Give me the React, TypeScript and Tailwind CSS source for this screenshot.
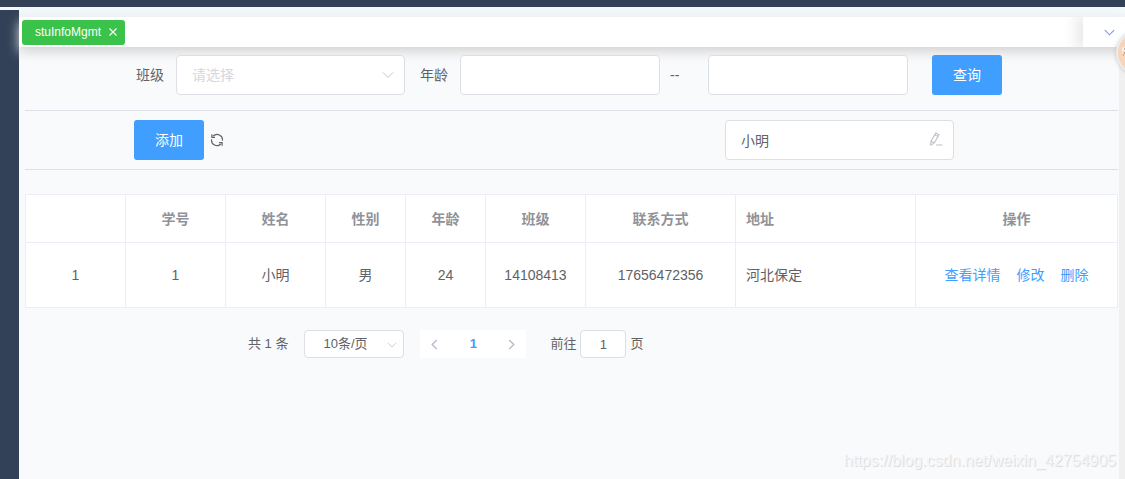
import { useState } from "react";

interface IStudent {
  index: number;
  stuNo: string;
  name: string;
  gender: string;
  age: number;
  className: string;
  phone: string;
  address: string;
}

const students: IStudent[] = [
  {
    index: 1,
    stuNo: "1",
    name: "小明",
    gender: "男",
    age: 24,
    className: "14108413",
    phone: "17656472356",
    address: "河北保定",
  },
];

const th = "h-12 border-r border-b border-[#ebeef5] px-[10px] font-bold text-[#909399]";
const td = "h-[65px] border-r border-b border-[#ebeef5] px-[10px]";
const field = "rounded border border-[#dcdfe6] bg-white outline-none";
const primary = "h-10 w-[70px] shrink-0 rounded-[3px] bg-[#409eff] text-white";

const Chevron = ({ className, d }: { className: string; d: string }) => (
  <svg className={className} viewBox="0 0 12 12" fill="none" stroke="currentColor" aria-hidden="true">
    <path d={d} />
  </svg>
);

const down = "M1 3.5 6 8.5 11 3.5";

const TagBar = () => (
  <div className="relative mt-[7px] flex h-[30px] items-center bg-white pl-[3px] shadow-[0_5px_12px_#d4d4d4]">
    <div className="flex h-[25px] items-center gap-[7px] rounded-[3px] bg-[#3bc24a] pr-[7px] pl-[13px] text-xs text-white">
      <a href="#stuInfoMgmt">stuInfoMgmt</a>
      <button aria-label="关闭">
        <svg className="size-[10px]" viewBox="0 0 10 10" stroke="currentColor" strokeWidth="1.1" aria-hidden="true">
          <path d="M1.5 1.5 8.5 8.5M8.5 1.5 1.5 8.5" />
        </svg>
      </button>
    </div>
    <button
      aria-label="标签选项"
      className="ml-auto flex h-full w-[42px] items-center justify-center bg-white pl-[10px] text-[#7f93f8] shadow-[-3px_0_15px_3px_rgba(0,0,0,0.1)] [clip-path:inset(0_0_0_-20px)]"
    >
      <Chevron className="size-[11px] stroke-[1.2]" d={down} />
    </button>
    {/* floating ball, mostly past the right edge */}
    <div className="absolute top-[14px] -right-[35px] size-11 rounded-full border-2 border-[#ececec] bg-[#f8d5b8] shadow-[0_0_4px_rgba(0,0,0,0.2)]">
      <svg className="absolute top-[13px] left-[3px] h-3 w-2" viewBox="0 0 8 12" fill="none" aria-hidden="true">
        <path d="M1 3Q1 1 4 1H8V8H4V5H2L1 8Z" fill="#f4f0ea" />
        <path d="M3 3H6M4 6V8M2 9H3" stroke="#9a7f6c" />
      </svg>
    </div>
  </div>
);

const SearchForm = () => (
  <form className="flex items-center border-b border-[#dcdfe6] pt-2 pb-[15px] pl-[111px]" onSubmit={(e) => e.preventDefault()}>
    <label htmlFor="class" className="mr-3 shrink-0">班级</label>
    <div className="relative mr-[15px] w-[229px]">
      <select id="class" defaultValue="" className={`${field} block h-10 w-full appearance-none px-[15px] text-[#d5d7dc]`}>
        <option value="">请选择</option>
        <option value="14108413">14108413</option>
      </select>
      <Chevron className="pointer-events-none absolute top-[14px] right-[11px] size-3 text-[#c0c4cc]" d={down} />
    </div>
    <label htmlFor="minAge" className="mr-3 shrink-0">年龄</label>
    <input id="minAge" className={`${field} h-10 w-[200px] px-[15px]`} />
    <label htmlFor="maxAge" className="w-12 shrink-0 pl-[10px]">--</label>
    <input id="maxAge" className={`${field} h-10 w-[200px] px-[15px]`} />
    <button className={`${primary} ml-6`}>查询</button>
  </form>
);

const Toolbar = () => {
  const [name, setName] = useState("小明");
  return (
    <div className="flex h-[59px] items-center border-b border-[#dcdfe6] pl-[109px]">
      <button className={primary}>添加</button>
      <button aria-label="刷新" className="ml-[6px]">
        <svg className="size-[14px]" viewBox="0 0 14 14" fill="none" stroke="currentColor" strokeWidth="1.2" aria-hidden="true">
          <path d="M3.2 3A5.4 5.4 0 0 1 12.4 7.6M10.8 11A5.4 5.4 0 0 1 1.6 6.4" />
          <path d="M1.9 1.2V4.3H5M12.1 12.8V9.7H9" />
        </svg>
      </button>
      <div className="relative mr-[164px] ml-auto w-[229px]">
        <input
          aria-label="姓名"
          value={name}
          onChange={(e) => setName(e.target.value)}
          className={`${field} block h-10 w-full pr-[30px] pl-[15px]`}
        />
        <svg
          className="pointer-events-none absolute top-3 right-[11px] size-[14px] text-[#c0c4cc]"
          viewBox="0 0 14 14"
          fill="none"
          stroke="currentColor"
          strokeWidth="1.2"
          aria-hidden="true"
        >
          <path d="M6.8 1 10 2.8 5.2 11 1.8 13 2 9.2ZM5.8 2.8 9 4.6M2 9.2 5.2 11M7 13H13.5" />
        </svg>
      </div>
    </div>
  );
};

const StudentTable = () => (
  <table className="mt-6 w-full table-fixed border-separate border-spacing-0 border-t border-l border-[#ebeef5] bg-white text-center">
    <colgroup>
      <col className="w-[100px]" />
      <col className="w-[100px]" />
      <col className="w-[100px]" />
      <col className="w-20" />
      <col className="w-20" />
      <col className="w-[100px]" />
      <col className="w-[150px]" />
      <col className="w-[180px]" />
      <col />
    </colgroup>
    <thead>
      <tr>
        <th className={th}></th>
        <th className={th}>学号</th>
        <th className={th}>姓名</th>
        <th className={th}>性别</th>
        <th className={th}>年龄</th>
        <th className={th}>班级</th>
        <th className={th}>联系方式</th>
        <th className={`${th} text-left`}>地址</th>
        <th className={th}>操作</th>
      </tr>
    </thead>
    <tbody>
      {students.map((stu) => (
        <tr key={stu.stuNo}>
          <td className={td}>{stu.index}</td>
          <td className={td}>{stu.stuNo}</td>
          <td className={td}>{stu.name}</td>
          <td className={td}>{stu.gender}</td>
          <td className={td}>{stu.age}</td>
          <td className={td}>{stu.className}</td>
          <td className={td}>{stu.phone}</td>
          <td className={`${td} text-left`}>{stu.address}</td>
          <td className={td}>
            <div className="flex justify-center gap-4 text-[#409eff]">
              <button>查看详情</button>
              <button>修改</button>
              <button>删除</button>
            </div>
          </td>
        </tr>
      ))}
    </tbody>
  </table>
);

const Pagination = () => (
  <div className="mt-[22px] flex h-7 items-center pl-[223px] text-[13px]">
    <span className="mr-4">共 1 条</span>
    <div className="relative mr-4 w-[100px]">
      <select aria-label="每页条数" className={`${field} block h-7 w-full appearance-none pl-[18px]`}>
        <option>10条/页</option>
        <option>20条/页</option>
      </select>
      <Chevron className="pointer-events-none absolute top-[10px] right-[7px] size-[10px] text-[#c0c4cc]" d={down} />
    </div>
    <div className="mr-6 flex h-full w-[106px] items-center justify-between bg-white px-[9px]">
      <button aria-label="上一页" className="text-[#b4bccc]">
        <Chevron className="size-[11px] stroke-[1.5]" d="M8.5 1 3.5 6 8.5 11" />
      </button>
      <button className="font-bold text-[#409eff]">1</button>
      <button aria-label="下一页" className="text-[#b4bccc]">
        <Chevron className="size-[11px] stroke-[1.5]" d="M3.5 1 8.5 6 3.5 11" />
      </button>
    </div>
    <label className="flex items-center gap-1">
      前往
      <input defaultValue="1" className={`${field} h-7 w-[46px] text-center`} />
      页
    </label>
  </div>
);

const App = () => {
  return (
    <div className="flex min-h-screen flex-col overflow-x-clip bg-[#f9fafc] font-['Liberation_Sans','Noto_Sans_CJK_SC',sans-serif] text-sm text-[#606266]">
      <header className="h-[7px] bg-[#324157]" />
      <div className="flex flex-1">
        <aside className="w-[19px] shrink-0 border-t-[3px] border-[#f2f7f9] bg-[#324157]" />
        <main className="flex min-w-0 flex-1 flex-col">
          <div className="bg-[#f2f7f9] pt-[3px]">
            <TagBar />
          </div>
          <div className="flex flex-1">
            <div className="relative flex min-w-0 flex-1 flex-col pr-px pl-[6px]">
              <SearchForm />
              <Toolbar />
              <StudentTable />
              <Pagination />
              <p className="mt-auto mr-[2px] pb-[6px] text-right text-base text-[#f6f6f7] [text-shadow:1px_1px_0_#dcdddf]">
                https://blog.csdn.net/weixin_42754905
              </p>
            </div>
            <div className="w-[6px] bg-[#f0f0f0]" />
          </div>
        </main>
      </div>
    </div>
  );
};

export default App;
